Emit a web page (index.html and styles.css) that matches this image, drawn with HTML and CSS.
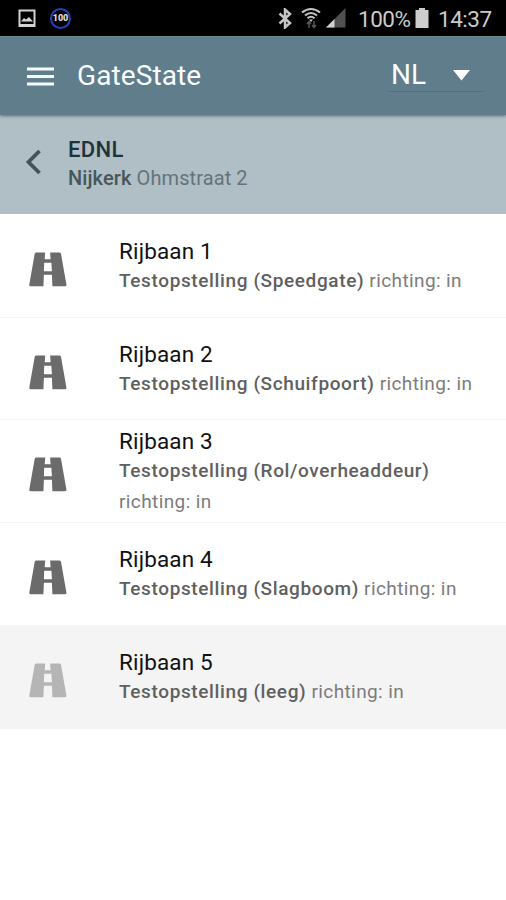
FILE: index.html
```
<!DOCTYPE html>
<html lang="nl">
<head>
<meta charset="utf-8">
<title>GateState</title>
<link rel="stylesheet" href="styles.css">
</head>
<body>
<svg class="symbols" aria-hidden="true">
  <symbol id="road" viewBox="0 0 38 35">
    <path d="M7.500 .5H16.200L15.700 7.300H21.600L21.100 .5H30.300Q31.600 .5 32 1.800L37.400 32.500Q37.700 34.300 36 34.300H23.400L22.900 22.700H14.900L14.400 34.300H1.500Q0 34.300 .3 32.500L5.700 1.800Q6.100 .5 7.500 .5ZM15.200 10.700L14.900 19.200H22.900L22.400 10.700Z"/>
  </symbol>
</svg>
<div class="status">
  <svg class="picture" width="18" height="19" viewBox="0 0 18 19"><path d="M1.500 1.500H16.500V17H1.500Z" fill="none" stroke="#d2d2d2" stroke-width="2"/><path d="M3 12.500L6 9L8 10.500L11 8L15 12.500Z" fill="#d2d2d2"/><path d="M1 15H17V18H1Z" fill="#d2d2d2"/></svg>
  <span class="badge">100</span>
  <svg class="bluetooth" width="14" height="21" viewBox="0 0 14 21"><path d="M1.500 5.500L12 15L7 19.500V1.500L12 6L1.500 15.500" fill="none" stroke="#c6c6c6" stroke-width="2.500"/></svg>
  <svg class="wifi" width="20" height="22" viewBox="0 0 20 22"><g fill="none" stroke="#c4c4c4" stroke-width="2.100"><path d="M1 5.500Q10-1.500 19 5.500M4 8.500Q10 3.500 16 8.500M6.500 11.300Q10 8.200 13.500 11.300"/></g><path d="M8 12.500H12L10 15Z" fill="#c4c4c4"/><path d="M8 21V15M6 17L8 14.500L10 17M13 14V20M11 18L13 20.500L15 18" fill="none" stroke="#555" stroke-width="1.500"/></svg>
  <svg class="signal" width="20" height="20" viewBox="0 0 20 20"><path d="M0 19.500L19.500 0V19.500Z" fill="#505050"/><path d="M0 19.500L8.500 11V19.500Z" fill="#d0d0d0"/></svg>
  <span class="percent">100%</span>
  <svg class="battery" width="14" height="20" viewBox="0 0 14 20"><path d="M4 0H10V2H13.500V20H.5V2H4Z" fill="#cdcdcd"/></svg>
  <span class="clock">14:37</span>
</div>
<header class="bar">
  <svg class="menu" width="27" height="20" viewBox="0 0 27 20"><path d="M0 2H27M0 9.500H27M0 17H27" stroke="#f4fbff" stroke-width="3"/></svg>
  <h1 class="title">GateState</h1>
  <div class="language"><span>NL</span><svg width="17" height="11" viewBox="0 0 17 11"><path d="M0 0H17L8.500 10.500Z" fill="#fff"/></svg></div>
</header>
<section class="location">
  <svg class="back" width="17" height="26" viewBox="0 0 17 26"><path d="M14.500 2L3.500 13L14.500 24" fill="none" stroke="#465256" stroke-width="3.800"/></svg>
  <div>
    <h2 class="site">EDNL</h2>
    <p class="address"><b>Nijkerk</b> Ohmstraat 2</p>
  </div>
</section>
<main class="lanes">
  <article class="lane"><svg class="road"><use href="#road"/></svg><div class="info"><h3>Rijbaan 1</h3><p><b>Testopstelling (Speedgate)</b> richting: in</p></div></article>
  <article class="lane"><svg class="road"><use href="#road"/></svg><div class="info"><h3>Rijbaan 2</h3><p><b>Testopstelling (Schuifpoort)</b> richting: in</p></div></article>
  <article class="lane"><svg class="road"><use href="#road"/></svg><div class="info"><h3>Rijbaan 3</h3><p><b>Testopstelling (Rol/overheaddeur)</b><br>richting: in</p></div></article>
  <article class="lane raised"><svg class="road"><use href="#road"/></svg><div class="info"><h3>Rijbaan 4</h3><p><b>Testopstelling (Slagboom)</b> richting: in</p></div></article>
  <article class="lane raised inactive"><svg class="road"><use href="#road"/></svg><div class="info"><h3>Rijbaan 5</h3><p><b>Testopstelling (leeg)</b> richting: in</p></div></article>
</main>
</body>
</html>
```
FILE: styles.css
```
* { box-sizing: border-box; }
body { margin: 0; background: #fff; font-family: Roboto, sans-serif; }
h1, h2, h3, p { margin: 0; white-space: nowrap; }
svg { display: block; flex: none; }
.symbols { position: absolute; width: 0; height: 0; }
.status { display: flex; align-items: center; height: 36px; padding-left: 18px; background: #000; color: #cbcbcb; font-size: 22.5px; letter-spacing: -.5px; line-height: 36px; }
.badge { width: 21px; height: 21px; margin-left: 14px; border: 2px solid #2940b4; border-radius: 50%; color: #ddd; font-size: 9px; font-weight: 900; letter-spacing: 0; line-height: 17px; display: flex; justify-content: center; }
.bluetooth { margin-left: 207px; }
.wifi { margin-left: 9px; }
.signal { margin-left: 5px; }
.percent { width: 52px; margin-left: 12px; padding-top: 1px; }
.battery { margin-left: 5px; }
.clock { margin-left: 9px; padding-top: 1px; }
.bar { position: relative; display: flex; align-items: center; height: 79px; padding: 0 22px 0 27px; background: #607d8c; border-top: 1px solid #6b8792; box-shadow: 0 1px 3px rgba(0, 0, 0, .45); color: #f8fdff; }
.menu { margin-top: 2px; }
.title { margin-left: 23px; font-size: 28px; font-weight: 400; line-height: 36px; letter-spacing: .1px; }
.language { display: flex; align-items: center; justify-content: space-between; width: 95px; height: 32px; margin-left: auto; padding: 0 14px 0 2px; border-bottom: 1px solid #567078; font-size: 28px; line-height: 32px; }
.language span { margin-top: -1px; }
.location { display: flex; align-items: center; height: 99px; padding-left: 25px; background: #b0bec5; }
.back { margin-top: -5px; }
.location div { margin: -1px 0 0 26px; }
.site { color: #1d343d; font-size: 22px; font-weight: 500; line-height: 29px; letter-spacing: .4px; }
.address { color: #64747a; font-size: 20px; line-height: 29px; letter-spacing: .1px; }
.address b { color: #46565b; font-weight: 500; }
.lanes { display: grid; grid-template-rows: 104px 102px 103px 103px 103px; }
.lane { display: flex; align-items: center; padding-left: 29px; border-bottom: 1px solid #f4f4f4; }
.road { width: 38px; height: 35px; margin-top: 7px; fill: #6b6b6b; }
.info { margin: 2px 0 0 52px; }
.raised .info { margin-top: 0; }
.info h3 { color: #111; font-size: 22.5px; font-weight: 400; line-height: 28px; letter-spacing: .15px; }
.info p { color: #7c7c7c; font-size: 19px; line-height: 31px; letter-spacing: .4px; }
.info b { color: #606060; font-weight: 500; letter-spacing: .62px; }
.inactive { background: #f4f4f4; }
.inactive .road { fill: #b5b5b5; }
```
